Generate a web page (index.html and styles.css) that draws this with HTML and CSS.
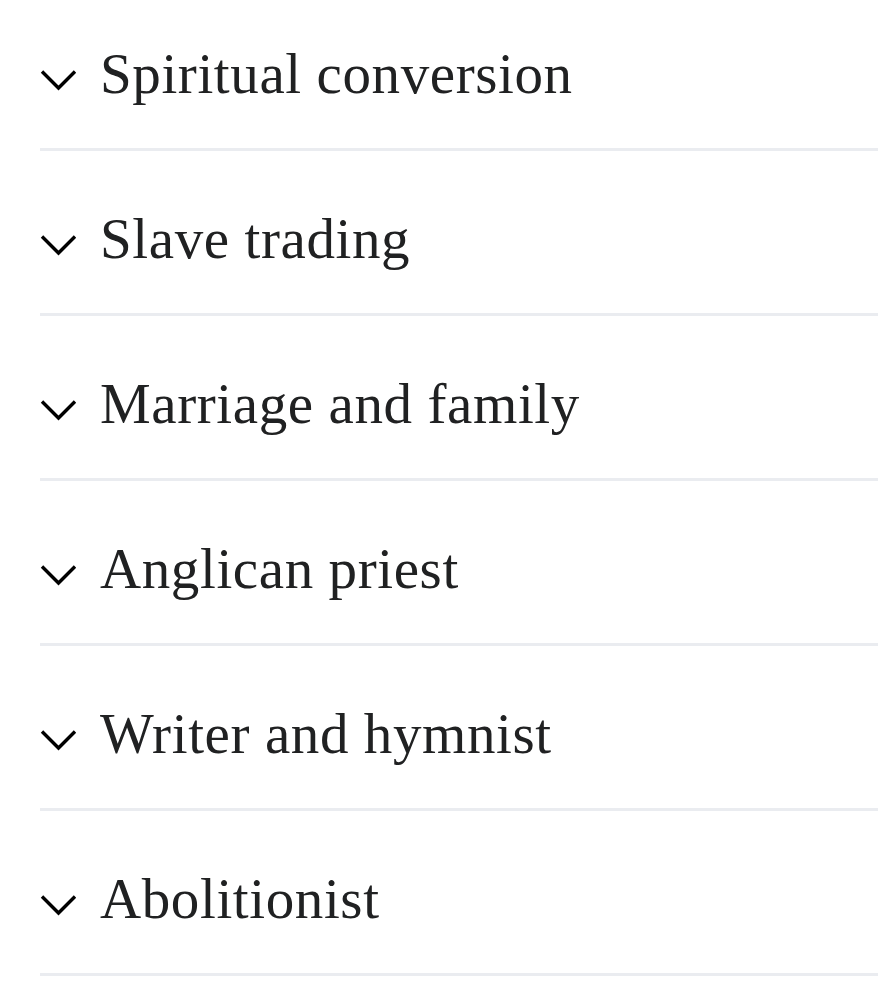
FILE: index.html
```html
<!DOCTYPE html>
<html lang="en">
<head>
<meta charset="utf-8">
<title>Sections</title>
<link rel="stylesheet" href="styles.css">
</head>
<body>
<div class="sections">
  <div class="section"><svg class="chev" viewBox="0 0 37 22" width="37" height="22"><polyline points="2,2.5 18.5,19 35,2.5"/></svg><h2 class="title">Spiritual conversion</h2></div>
  <div class="section"><svg class="chev" viewBox="0 0 37 22" width="37" height="22"><polyline points="2,2.5 18.5,19 35,2.5"/></svg><h2 class="title">Slave trading</h2></div>
  <div class="section"><svg class="chev" viewBox="0 0 37 22" width="37" height="22"><polyline points="2,2.5 18.5,19 35,2.5"/></svg><h2 class="title">Marriage and family</h2></div>
  <div class="section"><svg class="chev" viewBox="0 0 37 22" width="37" height="22"><polyline points="2,2.5 18.5,19 35,2.5"/></svg><h2 class="title">Anglican priest</h2></div>
  <div class="section"><svg class="chev" viewBox="0 0 37 22" width="37" height="22"><polyline points="2,2.5 18.5,19 35,2.5"/></svg><h2 class="title">Writer and hymnist</h2></div>
  <div class="section"><svg class="chev" viewBox="0 0 37 22" width="37" height="22"><polyline points="2,2.5 18.5,19 35,2.5"/></svg><h2 class="title">Abolitionist</h2></div>
</div>
</body>
</html>
```
FILE: styles.css
```css
html, body {
  margin: 0;
  padding: 0;
  background: #ffffff;
}
body {
  overflow: hidden;
}
.sections {
  margin-top: -14px;
  padding-left: 40px;
}
.section {
  display: flex;
  align-items: flex-start;
  gap: 23px;
  padding: 60px 0 46px 0;
  border-bottom: 3px solid #eaecf0;
}
.chev {
  flex: none;
  margin-top: 23px;
  fill: none;
  stroke: #000000;
  stroke-width: 3.4;
  stroke-linecap: butt;
  stroke-linejoin: miter;
}
.title {
  margin: 0;
  font-family: "Liberation Serif", serif;
  font-weight: normal;
  font-size: 57px;
  line-height: 56px;
  letter-spacing: 0.6px;
  color: #202122;
}
```
